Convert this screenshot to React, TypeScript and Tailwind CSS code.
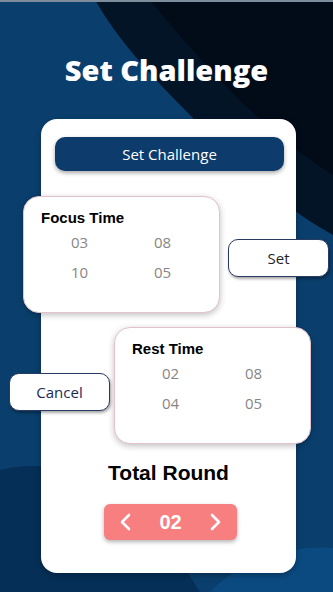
import React, { useState } from "react";

const Background: React.FC = () => (
  <svg className="absolute inset-0 h-full w-full" viewBox="0 0 333 592" preserveAspectRatio="none">
    <rect width="333" height="592" fill="#0a3f6d" />
    <path d="M0 0 H110 C150 60 200 120 333 215 V0 Z" fill="#0c4a80" />
    <path d="M95 0 H333 V235 C270 200 225 150 190 115 C150 75 118 40 95 0 Z" fill="#041427" />
    <path d="M150 0 H333 V175 C270 135 220 85 150 0 Z" fill="#020b18" />
    <path d="M0 470 C60 455 130 480 200 592 H0 Z" fill="#062f57" />
    <path d="M210 592 C240 560 290 545 333 548 V592 Z" fill="#0b4a80" />
    <rect width="333" height="2" fill="#7d8d9c" />
  </svg>
);

const TimeCard: React.FC<{ title: string; values: string[] }> = ({ title, values }) => (
  <div className="w-[197px] h-[117px] shrink-0 rounded-2xl border border-[#e3c3c9] bg-white pt-[11px] shadow-[0_2px_6px_rgba(0,0,0,0.25)]">
    <h3 className="pl-[17px] text-[15px] font-bold leading-[20px] text-black" style={{ fontFamily: "'Liberation Sans', Arial, sans-serif" }}>
      {title}
    </h3>
    <div className="ml-[14px] mt-[3px] grid w-[166px] grid-cols-2 gap-y-[8px] text-center text-[15px] font-normal leading-[22px] text-[#868686]">
      {values.map((v, i) => (
        <span key={i}>{v}</span>
      ))}
    </div>
  </div>
);

const SideButton: React.FC<{ label: string; color: string }> = ({ label, color }) => (
  <button className={`h-[38px] w-[101px] shrink-0 rounded-[10px] border border-[#2a3a63] bg-white text-[15px] shadow-[1px_2px_3px_rgba(0,0,0,0.35)] ${color}`}>
    {label}
  </button>
);

export default function App() {
  const [round, setRound] = useState<number>(2);

  return (
    <div className="relative h-[592px] w-[333px] overflow-hidden" style={{ fontFamily: "'Open Sans', 'Noto Sans', sans-serif" }}>
      <Background />
      <div className="relative flex flex-col items-center">
        <h1 className="mt-[49px] h-[70px] text-[29px] font-extrabold leading-[42px] text-white" style={{ fontFamily: "'Open Sans', sans-serif" }}>
          Set Challenge
        </h1>

        <div className="ml-[4px] flex h-[454px] w-[255px] flex-col rounded-2xl bg-white shadow-[0_2px_6px_rgba(0,0,0,0.3)]">
          <button className="ml-[14px] mt-[18px] h-[34px] w-[229px] rounded-[10px] bg-[#0d3b6c] text-[15px] text-white shadow-[0_2px_4px_rgba(0,0,0,0.35)]">
            Set Challenge
          </button>

          <div className="-ml-[18px] mt-[25px] flex items-start">
            <TimeCard title="Focus Time" values={["03", "08", "10", "05"]} />
            <div className="ml-[8px] mt-[43px]">
              <SideButton label="Set" color="text-[#1f1f1f]" />
            </div>
          </div>

          <div className="-ml-[32px] mt-[14px] flex items-start">
            <div className="mt-[46px]">
              <SideButton label="Cancel" color="text-[#1b2a58]" />
            </div>
            <div className="ml-[4px]">
              <TimeCard title="Rest Time" values={["02", "08", "04", "05"]} />
            </div>
          </div>

          <h2
            className="mt-[16px] text-center text-[21px] font-bold leading-[26px] text-black"
            style={{ fontFamily: "'Liberation Sans', Arial, sans-serif" }}
          >
            Total Round
          </h2>

          <div className="ml-[63px] mt-[18px] flex h-[36px] w-[133px] items-center justify-between rounded-md bg-[#f77f7f] px-[14px] shadow-[0_2px_4px_rgba(0,0,0,0.3)]">
            <button onClick={() => setRound((r) => Math.max(1, r - 1))} className="text-white">
              <svg width="14" height="18" viewBox="0 0 14 18" fill="none">
                <path d="M11 2 L4 9 L11 16" stroke="white" strokeWidth="2.6" strokeLinecap="round" strokeLinejoin="round" />
              </svg>
            </button>
            <span className="text-[20px] font-bold text-white" style={{ fontFamily: "'Liberation Sans', Arial, sans-serif" }}>
              {String(round).padStart(2, "0")}
            </span>
            <button onClick={() => setRound((r) => r + 1)} className="text-white">
              <svg width="14" height="18" viewBox="0 0 14 18" fill="none">
                <path d="M3 2 L10 9 L3 16" stroke="white" strokeWidth="2.6" strokeLinecap="round" strokeLinejoin="round" />
              </svg>
            </button>
          </div>
        </div>
      </div>
    </div>
  );
}
